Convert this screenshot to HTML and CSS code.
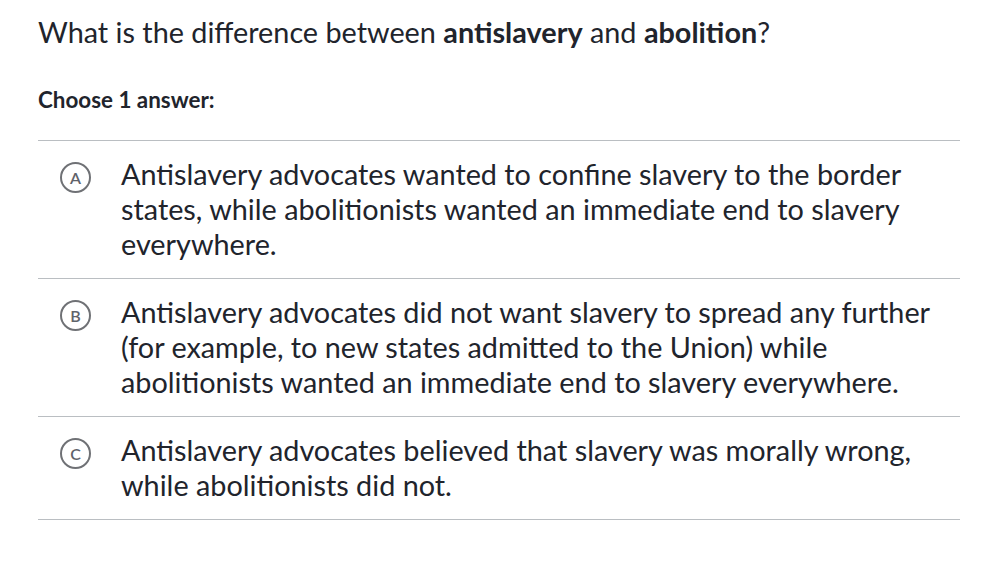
FILE: index.html
```html
<!DOCTYPE html>
<html>
<head>
<meta charset="utf-8">
<link rel="stylesheet" href="styles.css">
</head>
<body>
<main class="quiz">
  <h1 class="question">What is the difference between <strong>antislavery</strong> and <strong>abolition</strong>?</h1>
  <p class="instructions">Choose 1 answer:</p>
  <ul class="choices">
    <li class="choice">
      <span class="letter">A</span>
      <span class="text">Antislavery advocates wanted to confine slavery to the border states, while abolitionists wanted an immediate end to slavery everywhere.</span>
    </li>
    <li class="choice">
      <span class="letter">B</span>
      <span class="text">Antislavery advocates did not want slavery to spread any further (for example, to new states admitted to the Union) while abolitionists wanted an immediate end to slavery everywhere.</span>
    </li>
    <li class="choice">
      <span class="letter">C</span>
      <span class="text">Antislavery advocates believed that slavery was morally wrong, while abolitionists did not.</span>
    </li>
  </ul>
</main>
</body>
</html>
```

FILE: styles.css
```css
* { box-sizing: border-box; }
html, body { margin: 0; padding: 0; background: #fff; }
body {
  font-family: Lato, "Open Sans", sans-serif;
  color: #21242c;
}
.quiz {
  width: 922px;
  margin-left: 38px;
  padding-top: 14px;
}
.question {
  margin: 0;
  font-size: 28.8px;
  font-weight: 400;
  line-height: 36px;
}
.question strong { font-weight: 700; }
.instructions {
  margin: 36px 0 0 0;
  font-size: 22.4px;
  font-weight: 700;
  line-height: 28px;
}
.choices {
  list-style: none;
  margin: 26px 0 0 0;
  padding: 0;
  border-top: 1px solid #babec2;
}
.choice {
  display: flex;
  align-items: flex-start;
  gap: 30px;
  padding: 16px 0 16px 22px;
  border-bottom: 1px solid #babec2;
}
.letter {
  flex: none;
  width: 31px;
  height: 31px;
  margin-top: 5px;
  border: 2.5px solid #6f7175;
  border-radius: 50%;
  display: flex;
  align-items: center;
  justify-content: center;
  font-size: 16px;
  font-weight: 600;
  color: #5f636a;
}
.text {
  font-size: 28.8px;
  line-height: 35px;
}
```
